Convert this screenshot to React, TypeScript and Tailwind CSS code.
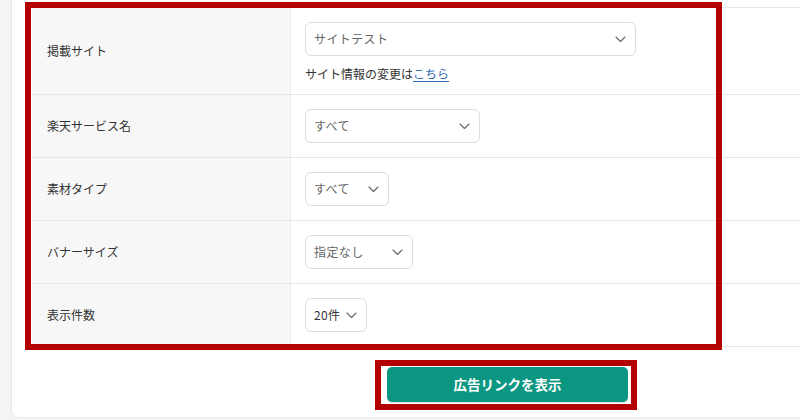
import { ReactNode } from 'react';

const Chevron = () => (
  <svg width="11" height="7" viewBox="0 0 11 7" fill="none" className="shrink-0">
    <path d="M1 1 L5.5 5.5 L10 1" stroke="#666" strokeWidth="1.1" strokeLinecap="round" strokeLinejoin="round" />
  </svg>
);

const Select = ({ value, width, dark }: { value: string; width: string; dark?: boolean }) => (
  <div
    className={`${width} h-[34px] flex items-center justify-between pl-[8px] pr-[9px] bg-white border border-[#dcdcdc] rounded-[6px] text-[12px] tracking-[0.4px] ${
      dark ? 'text-[#333]' : 'text-[#666]'
    }`}
  >
    <span>{value}</span>
    <Chevron />
  </div>
);

const Row = ({ label, children, first }: { label: string; children: ReactNode; first?: boolean }) => (
  <div className="flex border-b border-[#e6e6e6]">
    <div className="w-[259px] shrink-0 bg-[#f7f7f7] flex items-center pl-[15px] text-[12px] text-[#333] border-r border-[#ececec]">
      {label}
    </div>
    <div className={`flex-1 pl-[14px] ${first ? 'pt-[14px] pb-[10px]' : 'py-[14px]'}`}>{children}</div>
  </div>
);

export default function App() {
  return (
    <div
      className="relative w-[800px] h-[420px] overflow-hidden bg-[#f4f4f4]"
      style={{ fontFamily: '"Noto Sans CJK JP", "Noto Sans", sans-serif' }}
    >
      <div className="ml-[11px] w-[820px] h-[428px] -mt-[10px] pt-[17px] bg-white border-l border-b border-[#e8e8e8] rounded-bl-[7px]">
        <div className="ml-[20px] border-t border-[#e6e6e6]">
          <Row label="掲載サイト" first>
            <Select value="サイトテスト" width="w-[331px]" />
            <p className="mt-[8px] leading-[20px] text-[12px] text-[#333]">
              サイト情報の変更は
              <span className="text-[#2e6db4] underline underline-offset-2">こちら</span>
            </p>
          </Row>
          <Row label="楽天サービス名">
            <Select value="すべて" width="w-[175px]" />
          </Row>
          <Row label="素材タイプ">
            <Select value="すべて" width="w-[84px]" />
          </Row>
          <Row label="バナーサイズ">
            <Select value="指定なし" width="w-[108px]" />
          </Row>
          <Row label="表示件数">
            <Select value="20件" width="w-[62px]" dark />
          </Row>
        </div>

        <div className="mt-[20px] ml-[375px] relative w-[241px]">
          <button className="w-[241px] h-[35px] rounded-[5px] bg-[#0b9682] text-white text-[13.5px] font-bold shadow-[0_1px_1px_rgba(0,0,0,0.15)]">
            広告リンクを表示
          </button>
          <div className="absolute -left-[12px] -top-[7px] -right-[9px] -bottom-[8px] border-[6px] border-[#b30000] pointer-events-none" />
        </div>
      </div>

      <div className="absolute left-[25px] top-[2px] w-[697px] h-[348px] border-[6px] border-[#b30000] pointer-events-none" />
    </div>
  );
}
